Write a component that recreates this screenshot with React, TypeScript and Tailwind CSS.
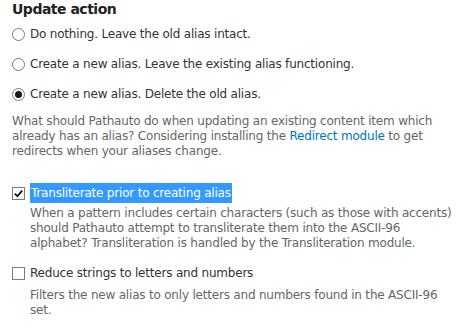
import React from "react";

const font = "font-['DejaVu_Sans',Verdana,sans-serif] tracking-[-0.2px]";

function Radio({ checked }: { checked?: boolean }) {
  return (
    <span className="flex h-[13px] w-[13px] shrink-0 items-center justify-center rounded-full border border-[#7a7a7a] bg-white">
      {checked ? <span className="h-[7px] w-[7px] rounded-full bg-[#1a1a1a]" /> : null}
    </span>
  );
}

function Checkbox({ checked }: { checked?: boolean }) {
  return (
    <span className="flex h-[13px] w-[13px] shrink-0 items-center justify-center border border-[#7a7a7a] bg-white">
      {checked ? (
        <svg viewBox="0 0 12 12" className="h-[11px] w-[11px]">
          <path d="M2 6.2 L4.8 9 L10 2.8" fill="none" stroke="#111" strokeWidth="2" />
        </svg>
      ) : null}
    </span>
  );
}

export default function App() {
  const options = [
    "Do nothing. Leave the old alias intact.",
    "Create a new alias. Leave the existing alias functioning.",
    "Create a new alias. Delete the old alias.",
  ];
  return (
    <div className={`${font} w-[456px] h-[331px] overflow-hidden bg-white pl-[12px] pt-0 text-[12px] text-[#333]`}>
      <h3 className="text-[14px] font-bold leading-[18px] tracking-[-0.5px] text-[#222]">Update action</h3>
      <div className="mt-[8px] flex flex-col gap-[13px]">
        {options.map((o, i) => (
          <label key={o} className="flex items-center gap-[5px] leading-[17px]">
            <Radio checked={i === 2} />
            <span>{o}</span>
          </label>
        ))}
      </div>
      <p className="mt-[11px] whitespace-nowrap leading-[15px] text-[#666]">
        What should Pathauto do when updating an existing content item which
        <br />
        already has an alias? Considering installing the <a className="text-[#0074bd]">Redirect module</a> to get
        <br />
        redirects when your aliases change.
      </p>

      <div className="mt-[24px]">
        <label className="flex items-center gap-[5px]">
          <Checkbox checked />
          <span className="bg-[#3399ff] px-[1px] leading-[20px] text-white">Transliterate prior to creating alias</span>
        </label>
        <p className="ml-[18px] mt-[3px] whitespace-nowrap leading-[15px] text-[#666]">
          When a pattern includes certain characters (such as those with accents)
          <br />
          should Pathauto attempt to transliterate them into the ASCII-96
          <br />
          alphabet? Transliteration is handled by the Transliteration module.
        </p>
      </div>

      <div className="mt-[14px]">
        <label className="flex items-center gap-[5px] leading-[17px]">
          <Checkbox />
          <span>Reduce strings to letters and numbers</span>
        </label>
        <p className="ml-[18px] mt-[6px] whitespace-nowrap leading-[15px] text-[#666]">
          Filters the new alias to only letters and numbers found in the ASCII-96
          <br />
          set.
        </p>
      </div>
    </div>
  );
}
